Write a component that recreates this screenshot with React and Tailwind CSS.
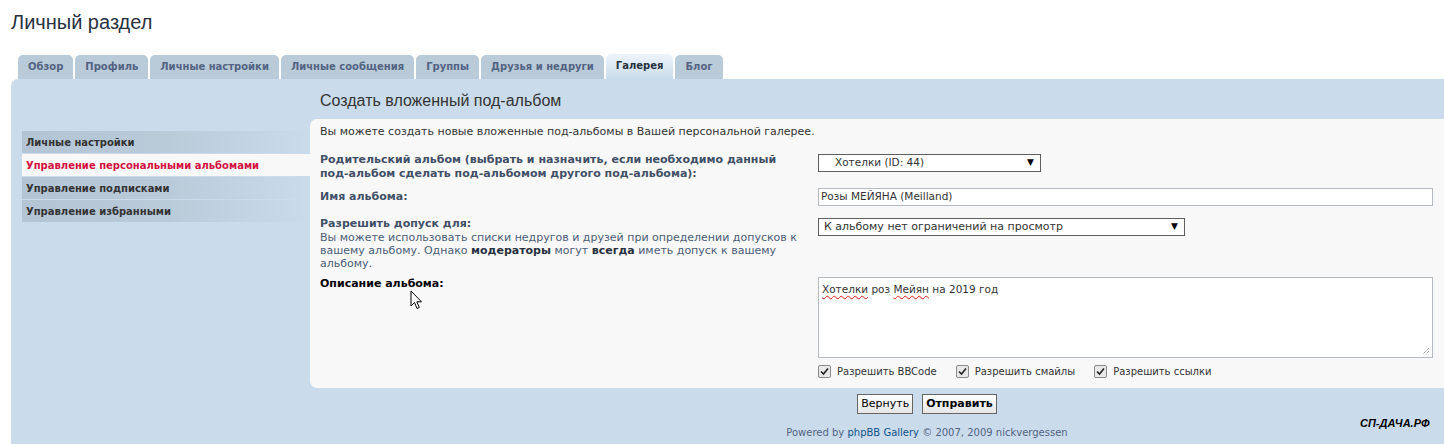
import React from 'react';

const tabs = [
  'Обзор',
  'Профиль',
  'Личные настройки',
  'Личные сообщения',
  'Группы',
  'Друзья и недруги',
  'Галерея',
  'Блог',
];

const menu = [
  'Личные настройки',
  'Управление персональными альбомами',
  'Управление подписками',
  'Управление избранными',
];

const Check = ({ label }) => (
  <span className="flex items-center gap-[6px]">
    <span className="w-[13px] h-[13px] border border-[#8a8a8a] bg-[#e8e8e8] rounded-[2px] flex items-center justify-center">
      <svg width="9" height="9" viewBox="0 0 9 9">
        <path d="M1 4.5 L3.5 7 L8 1.5" fill="none" stroke="#222" strokeWidth="1.6" />
      </svg>
    </span>
    <span>{label}</span>
  </span>
);

const SelectBox = ({ width, text, indent, size }) => (
  <div
    className={`h-[18px] border border-[#5f5f5f] bg-white flex items-center justify-between pr-[6px] text-[#333] ${width} ${indent} ${size}`}
  >
    <span>{text}</span>
    <span className="text-[9px] text-black">▼</span>
  </div>
);

export default function App() {
  return (
    <div
      className="w-[1444px] h-[444px] overflow-hidden bg-white relative text-[11px]"
      style={{ fontFamily: '"DejaVu Sans", Verdana, sans-serif' }}
    >
      <h1
        className="pl-[11px] pt-[10px] h-[55px] text-[20px] leading-[24px] text-[#28313f] font-normal"
        style={{ fontFamily: '"Liberation Sans", Arial, sans-serif' }}
      >
        Личный раздел
      </h1>

      {/* Tabs */}
      <div className="flex items-end gap-[2px] pl-[18px] h-[24px]">
        {tabs.map((t) => {
          const active = t === 'Галерея';
          return (
            <div
              key={t}
              className={`rounded-t-[5px] px-[10px] text-[10px] font-bold leading-[24px] ${
                active
                  ? 'h-[25px] bg-gradient-to-b from-[#eef4fa] to-[#cadceb] text-[#28313f]'
                  : 'h-[24px] bg-[#b9cad9] text-[#536482]'
              }`}
            >
              {t}
            </div>
          );
        })}
      </div>

      {/* Panel */}
      <div className="ml-[11px] w-[1544px] bg-[#cadceb] rounded-tl-[7px] pb-[40px]">
        <div
          className="h-[40px] pl-[309px] flex items-center pt-[3px] text-[16px] text-[#333]"
          style={{ fontFamily: '"Liberation Sans", Arial, sans-serif' }}
        >
          Создать вложенный под-альбом
        </div>

        <div className="flex">
          <div className="w-[299px] pl-[11px] pt-[12px] flex flex-col gap-[1px]">
            {menu.map((m, i) =>
              i === 1 ? (
                <div
                  key={m}
                  className="h-[22px] pl-[4px] flex items-center text-[10px] font-bold text-[#d31141] bg-[#f8f8f8]"
                >
                  {m}
                </div>
              ) : (
                <div
                  key={m}
                  className="h-[22px] pl-[4px] flex items-center text-[10px] font-bold text-[#333] bg-gradient-to-r from-[#b3c5d4] via-[#b9cad9] to-[#cadceb]"
                >
                  {m}
                </div>
              )
            )}
          </div>

          <div className="flex-1 h-[269px] bg-[#f8f8f8] rounded-l-[7px] pl-[10px] pt-[6px] text-[#333] relative">
            <p className="leading-[14px]">
              Вы можете создать новые вложенные под-альбомы в Вашей персональной галерее.
            </p>

            {/* row 1 */}
            <div className="flex mt-[14px]">
              <div className="w-[498px] font-bold text-[#425067] leading-[14px] whitespace-nowrap">
                Родительский альбом (выбрать и назначить, если необходимо данный
                <br />
                под-альбом сделать под-альбомом другого под-альбома):
              </div>
              <div className="pt-[1px]">
                <SelectBox width="w-[223px]" indent="pl-[16px]" size="text-[10.5px]" text="Хотелки (ID: 44)" />
              </div>
            </div>

            {/* row 2 */}
            <div className="flex mt-[7px] items-center">
              <div className="w-[498px] font-bold text-[#425067] leading-[14px]">Имя альбома:</div>
              <div className="w-[615px] h-[18px] border border-[#b4bac0] bg-white pl-[2px] flex items-center text-[10.5px] text-[#333]">
                Розы МЕЙЯНА (Meilland)
              </div>
            </div>

            {/* row 3 */}
            <div className="flex mt-[11px]">
              <div className="w-[498px] leading-[13px]">
                <div className="font-bold text-[#425067] leading-[14px]">Разрешить допуск для:</div>
                <div className="text-[#4c5d77] whitespace-nowrap">
                  Вы можете использовать списки недругов и друзей при определении допусков к
                  <br />
                  вашему альбому. Однако <b className="text-[#28313f]">модераторы</b> могут{' '}
                  <b className="text-[#28313f]">всегда</b> иметь допуск к вашему
                  <br />
                  альбому.
                </div>
              </div>
              <div className="pt-[1px]">
                <SelectBox
                  width="w-[367px]"
                  indent="pl-[5px]"
                  size="text-[11px]"
                  text="К альбому нет ограничений на просмотр"
                />
              </div>
            </div>

            {/* row 4 */}
            <div className="flex mt-[7px]">
              <div className="w-[498px] font-bold text-black leading-[14px]">Описание альбома:</div>
              <div className="flex flex-col">
                <div className="w-[615px] h-[81px] border border-[#b4bac0] bg-white pl-[3px] pt-[4px] relative text-[10.5px] text-[#333]">
                  <span className="underline decoration-wavy decoration-[#e02020] decoration-1 underline-offset-2">
                    Хотелки
                  </span>{' '}
                  роз{' '}
                  <span className="underline decoration-wavy decoration-[#e02020] decoration-1 underline-offset-2">
                    Мейян
                  </span>{' '}
                  на 2019 год
                  <svg className="absolute right-[2px] bottom-[2px]" width="8" height="8" viewBox="0 0 8 8">
                    <path d="M7 1 L1 7 M7 4 L4 7" stroke="#777" strokeWidth="1" strokeDasharray="1 1" />
                  </svg>
                </div>
                <div className="flex gap-[19px] mt-[6px] text-[10px] text-[#333]">
                  <Check label="Разрешить BBCode" />
                  <Check label="Разрешить смайлы" />
                  <Check label="Разрешить ссылки" />
                </div>
              </div>
            </div>

            {/* mouse pointer */}
            <svg className="absolute left-[100px] top-[171px]" width="14" height="21" viewBox="0 0 14 21">
              <path
                d="M1 1 L1 16 L4.5 12.5 L7 18.5 L9.3 17.5 L6.8 11.8 L11.5 11.8 Z"
                fill="#fff"
                stroke="#000"
                strokeWidth="1"
                strokeLinejoin="round"
              />
            </svg>
          </div>
        </div>

        {/* buttons + footer */}
        <div className="pl-[299px] pr-[11px] flex flex-col items-center">
          <div className="flex gap-[9px] mt-[6px]">
            <button className="h-[20px] px-[3px] border border-[#666] bg-gradient-to-b from-white to-[#e6e6e6] text-[11px] text-black leading-[18px]">
              Вернуть
            </button>
            <button className="h-[20px] px-[3px] border border-[#666] bg-gradient-to-b from-white to-[#e6e6e6] text-[11px] font-bold text-black leading-[18px]">
              Отправить
            </button>
          </div>
          <div className="mt-[11px] text-[10px] text-[#536482]">
            Powered by <span className="text-[#105289]">phpBB Gallery</span> © 2007, 2009 nickvergessen
          </div>
        </div>
      </div>

      {/* watermark */}
      <div
        className="absolute left-[1360px] top-[415px] text-[11px] font-bold italic text-black"
        style={{ fontFamily: '"Liberation Sans", Arial, sans-serif' }}
      >
        СП-ДАЧА.РФ
      </div>
    </div>
  );
}
